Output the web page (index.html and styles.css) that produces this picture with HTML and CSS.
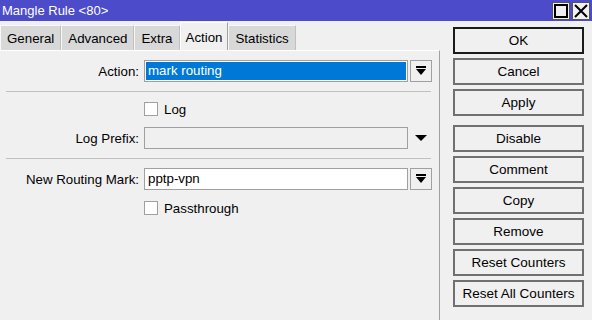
FILE: index.html
```html
<!DOCTYPE html>
<html>
  <head>
    <meta charset="UTF-8" />
    <title>Mangle Rule &lt;80&gt;</title>
    <link rel="stylesheet" href="styles.css">
  </head>
  <body>
    <div class="titlebar">
      <span class="title">Mangle Rule &lt;80&gt;</span>
      <span class="winbtns">
        <span class="winbtn"><svg width="14" height="14" viewBox="0 0 14 14"><rect x="1" y="1" width="12" height="12" fill="none" stroke="#000" stroke-width="2"/></svg></span>
        <span class="winbtn"><svg width="14" height="14" viewBox="0 0 14 14"><path d="M1 1 L13 13 M13 1 L1 13" stroke="#000" stroke-width="2"/></svg></span>
      </span>
    </div>
    <div class="main">
      <div class="left">
        <div class="tabs">
          <div class="tab">General</div>
          <div class="tab">Advanced</div>
          <div class="tab">Extra</div>
          <div class="tab active">Action</div>
          <div class="tab">Statistics</div>
        </div>
        <div class="panel">
          <div class="row first">
            <label class="lbl">Action:</label>
            <div class="field selected">mark routing</div>
            <button class="drop"><svg width="10" height="10" viewBox="0 0 10 10"><rect x="0" y="0" width="10" height="2" fill="#000"/><polygon points="0,3 10,3 5,9" fill="#000"/></svg></button>
          </div>
          <div class="sep"></div>
          <div class="check-row">
            <span class="box"></span><span>Log</span>
          </div>
          <div class="row">
            <label class="lbl">Log Prefix:</label>
            <div class="field disabled"></div>
            <span class="tri"><svg width="12" height="6" viewBox="0 0 12 6"><polygon points="0,0 12,0 6,6" fill="#000"/></svg></span>
          </div>
          <div class="sep"></div>
          <div class="row">
            <label class="lbl">New Routing Mark:</label>
            <div class="field">pptp-vpn</div>
            <button class="drop"><svg width="10" height="10" viewBox="0 0 10 10"><rect x="0" y="0" width="10" height="2" fill="#000"/><polygon points="0,3 10,3 5,9" fill="#000"/></svg></button>
          </div>
          <div class="check-row">
            <span class="box"></span><span>Passthrough</span>
          </div>
        </div>
      </div>
      <div class="buttons">
        <button class="btn default">OK</button>
        <button class="btn">Cancel</button>
        <button class="btn">Apply</button>
        <button class="btn gap">Disable</button>
        <button class="btn">Comment</button>
        <button class="btn">Copy</button>
        <button class="btn">Remove</button>
        <button class="btn">Reset Counters</button>
        <button class="btn">Reset All Counters</button>
      </div>
    </div>
  </body>
</html>
```
FILE: styles.css
```css
body {
  margin: 0;
  width: 592px;
  height: 320px;
  overflow: hidden;
  background: #f0f0f0;
  font-family: "Liberation Sans", Arial, sans-serif;
  font-size: 13.3px;
  color: #000;
}
.titlebar {
  height: 21px;
  background: #4c4ccb;
  display: flex;
  align-items: center;
  justify-content: space-between;
}
.title {
  color: #fff;
  padding-left: 2px;
  font-size: 13px;
}
.winbtns {
  display: flex;
  gap: 2px;
  padding-right: 2px;
}
.winbtn {
  width: 18px;
  height: 18px;
  background: #f0f0f0;
  border: 1px solid #555;
  box-sizing: border-box;
  display: flex;
  align-items: center;
  justify-content: center;
}
.main {
  display: flex;
  height: 299px;
}
.left {
  width: 440px;
  display: flex;
  flex-direction: column;
}
.tabs {
  display: flex;
  align-items: flex-end;
  height: 29px;
}
.tab {
  height: 24px;
  line-height: 26px;
  padding: 0 6px;
  background: #d8d8d8;
  border-top: 1px solid #f8f8f8;
  border-left: 1px solid #f8f8f8;
  border-right: 1px solid #c0c0c0;
  box-sizing: content-box;
}
.tab.active {
  height: 28px;
  line-height: 30px;
  padding: 0 5px;
  background: #f0f0f0;
  border-top: 1px solid #fff;
  border-left: 1px solid #fff;
  border-right: 1px solid #a0a0a0;
  margin-bottom: -1px;
}
.panel {
  flex: 1;
  border-top: 1px solid #fff;
  border-right: 1px solid #a0a0a0;
  padding-top: 9px;
}
.row {
  display: flex;
  align-items: center;
  height: 22px;
}
.lbl {
  width: 139px;
  text-align: right;
  margin-right: 5px;
}
.field {
  width: 264px;
  height: 22px;
  box-sizing: border-box;
  border: 1px solid #a0a0a0;
  background: #fff;
  padding-left: 3px;
  line-height: 20px;
}
.field.selected {
  background: #0078d7;
  color: #fff;
  border-color: #a0a0a0;
  box-shadow: inset 0 0 0 1px #fff;
}
.field.disabled {
  background: #f0f0f0;
}
.drop {
  width: 22px;
  height: 22px;
  margin-left: 2px;
  padding: 0;
  border: 1px solid #a0a0a0;
  background: #f0f0f0;
  display: flex;
  align-items: center;
  justify-content: center;
}
.tri {
  margin-left: 7px;
  display: flex;
}
.sep {
  height: 1px;
  background: #c0c0c0;
  margin: 9px 8px 9px 6px;
}
.check-row {
  display: flex;
  align-items: center;
  gap: 6px;
  margin: 3px 0 10px 144px;
  height: 16px;
}
.box {
  width: 14px;
  height: 14px;
  box-sizing: border-box;
  border: 1px solid #a0a0a0;
  background: #fff;
}
.row + .check-row {
  margin-top: 10px;
}
.buttons {
  display: flex;
  flex-direction: column;
  gap: 4px;
  padding: 6px 0 0 13px;
}
.btn {
  width: 131px;
  height: 27px;
  box-sizing: border-box;
  border: 2px solid #707070;
  background: #f0f0f0;
  font-family: inherit;
  font-size: 13.5px;
  color: #000;
  padding: 0;
}
.btn.default {
  border-color: #1a1a1a;
}
.btn.gap {
  margin-top: 5px;
}
```
